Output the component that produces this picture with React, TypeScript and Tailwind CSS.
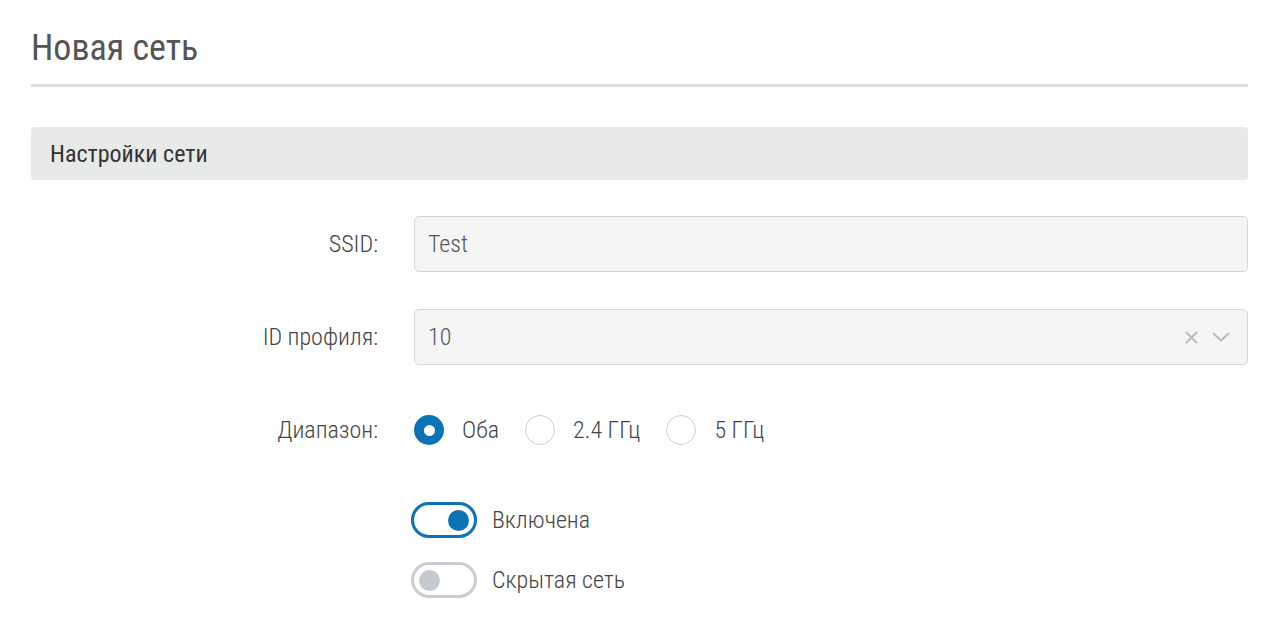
import { useState } from 'react';

const FONT = { fontFamily: 'Roboto, "Noto Sans", sans-serif', fontStretch: 'condensed' } as const;

function Radio({ checked, label, onClick }: { checked: boolean; label: string; onClick: () => void }) {
  return (
    <button type="button" onClick={onClick} className="flex items-center gap-[18px] cursor-pointer">
      {checked ? (
        <span className="flex h-[30px] w-[30px] items-center justify-center rounded-full bg-[#0b72b5]">
          <span className="h-[11px] w-[11px] rounded-full bg-white" />
        </span>
      ) : (
        <span className="h-[30px] w-[30px] rounded-full border border-[#c9cdd3] bg-white" />
      )}
      <span className="text-[24px] leading-[30px] font-light text-[#444]">{label}</span>
    </button>
  );
}

function Toggle({ on, label, onClick }: { on: boolean; label: string; onClick: () => void }) {
  return (
    <button type="button" onClick={onClick} className="-ml-[3px] flex items-center gap-[15px] cursor-pointer">
      <span
        className={
          on
            ? 'flex h-[36px] w-[66px] items-center justify-end rounded-full border-[3px] border-[#0b72b5] px-[5px]'
            : 'flex h-[36px] w-[66px] items-center justify-start rounded-full border-[3px] border-[#c9cdd3] px-[5px]'
        }
      >
        <span className={on ? 'h-[21px] w-[21px] rounded-full bg-[#0b72b5]' : 'h-[21px] w-[21px] rounded-full bg-[#c5c9d0]'} />
      </span>
      <span className="text-[24px] leading-[36px] font-light text-[#444]">{label}</span>
    </button>
  );
}

export default function App() {
  const [band, setBand] = useState('both');
  const [enabled, setEnabled] = useState(true);
  const [hidden, setHidden] = useState(false);

  return (
    <div className="min-h-screen bg-white pl-[31px] pr-[27px]" style={FONT}>
      <h1 className="pt-[26px] text-[36px] leading-[44px] font-normal text-[#555]">Новая сеть</h1>
      <div className="mt-[14px] h-[3px] bg-[#dfdfdf]" />

      <div className="mt-[40px] flex h-[53px] items-center rounded-[4px] bg-[#e8e9e9] px-[19px]">
        <span className="text-[24px] font-normal text-[#333]">Настройки сети</span>
      </div>

      <div className="mt-[36px] grid grid-cols-[347px_1fr] items-center gap-x-[36px]">
        <label className="text-right text-[24px] font-light text-[#444]">SSID:</label>
        <div className="flex h-[56px] items-center rounded-[5px] border border-[#d3d6da] bg-[#f5f5f5] px-[13px]">
          <span className="text-[24px] font-light text-[#555]">Test</span>
        </div>

        <label className="mt-[37px] text-right text-[24px] font-light text-[#444]">ID профиля:</label>
        <div className="mt-[37px] flex h-[56px] items-center justify-between rounded-[5px] border border-[#d3d6da] bg-[#f5f5f5] pl-[13px] pr-[17px]">
          <span className="text-[24px] font-light text-[#555]">10</span>
          <div className="flex items-center gap-[14px]">
            <svg width="13" height="13" viewBox="0 0 13 13" fill="none" stroke="#b8bcc2" strokeWidth="2" strokeLinecap="round">
              <path d="M1.5 1.5l10 10M11.5 1.5l-10 10" />
            </svg>
            <svg width="18" height="10" viewBox="0 0 18 10" fill="none" stroke="#b8bcc2" strokeWidth="2" strokeLinecap="round" strokeLinejoin="round">
              <path d="M1.5 1.5L9 8.5l7.5-7" />
            </svg>
          </div>
        </div>

        <label className="mt-[50px] text-right text-[24px] leading-[30px] font-light text-[#444]">Диапазон:</label>
        <div className="mt-[50px] flex items-center gap-[26px]">
          <Radio checked={band === 'both'} label="Оба" onClick={() => setBand('both')} />
          <Radio checked={band === '24'} label="2.4 ГГц" onClick={() => setBand('24')} />
          <Radio checked={band === '5'} label="5 ГГц" onClick={() => setBand('5')} />
        </div>

        <div className="mt-[57px]" />
        <div className="mt-[57px]">
          <Toggle on={enabled} label="Включена" onClick={() => setEnabled(!enabled)} />
        </div>

        <div className="mt-[24px]" />
        <div className="mt-[24px]">
          <Toggle on={hidden} label="Скрытая сеть" onClick={() => setHidden(!hidden)} />
        </div>
      </div>
    </div>
  );
}
